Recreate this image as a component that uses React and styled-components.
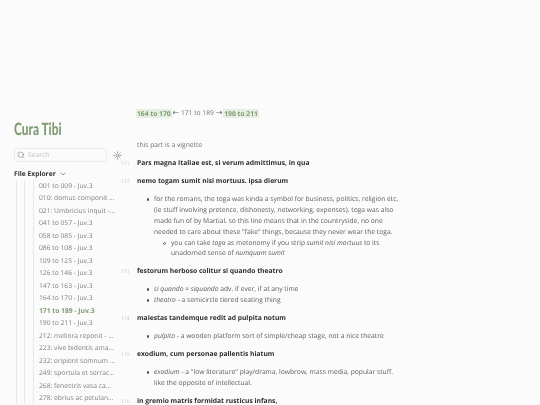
import React from "react";
import styled, { createGlobalStyle } from "styled-components";
import { Search, Sun, ChevronDown } from "lucide-react";

const GlobalStyle = createGlobalStyle`
  html, body {
    margin: 0;
    padding: 0;
    background: #fbfbfb;
  }
  body {
    font-family: "Open Sans", "Liberation Sans", sans-serif;
    font-size: 6.72px;
    line-height: 10.8px;
    color: #5a5a5a;
    text-rendering: geometricPrecision;
  }
`;

const Page = styled.div`
  display: flex;
  width: 540px;
  height: 405px;
  overflow: hidden;
`;

const Sidebar = styled.aside`
  width: 137px;
  flex: none;
  box-sizing: border-box;
  padding: 120px 0 0 14px;
  will-change: transform;
`;

const Title = styled.h1`
  margin: 0 0 10px;
  font-family: "Lato", "Liberation Sans", sans-serif;
  font-size: 17px;
  line-height: 18px;
  font-weight: 900;
  color: #7f9c72;
  transform: scaleX(0.7);
  transform-origin: left center;
  white-space: nowrap;
`;

const SearchRow = styled.div`
  display: flex;
  align-items: center;
  gap: 5px;
`;

const SearchBox = styled.div`
  width: 93px;
  height: 14px;
  box-sizing: border-box;
  display: flex;
  align-items: center;
  gap: 3px;
  padding-left: 2px;
  border: 1px solid #ececec;
  border-radius: 3px;
  color: #c4c4c4;
  svg {
    color: #666;
  }
`;

const ThemeToggle = styled.div`
  display: flex;
  margin-left: 1px;
  color: #555;
`;

const ExplorerHead = styled.div`
  display: flex;
  align-items: center;
  gap: 3px;
  margin-top: 6px;
  height: 12px;
  font-weight: 700;
  color: #333;
`;

const Guide = styled.div`
  margin-left: ${(p) => p.$indent}px;
  padding-left: ${(p) => p.$pad}px;
  border-left: 1px solid #e8e8e8;
`;

const FileList = styled.ul`
  list-style: none;
  margin: 0;
  padding: 0;
  width: 76px;
`;

const FileItem = styled.li`
  height: 12.47px;
  line-height: 12.47px;
  white-space: nowrap;
  overflow: hidden;
  text-overflow: ellipsis;
  color: ${(p) => (p.$active ? "#7f9c72" : "#808080")};
  font-weight: ${(p) => (p.$active ? 700 : 400)};
`;

const Main = styled.main`
  width: 267px;
  flex: none;
  padding-top: 108px;
  will-change: transform;
`;

const Nav = styled.div`
  display: flex;
  align-items: center;
  gap: 1.8px;
  height: 10.8px;
  margin-bottom: 21.7px;
  color: #777;
  white-space: nowrap;
`;

const NavLink = styled.span`
  padding: 0 1px;
  margin: 0 -1px;
  border-radius: 1px;
  background: #e5eee0;
  color: #7f9c72;
  font-weight: 700;
  line-height: 9px;
`;

const Arrow = styled.span`
  font-family: "DejaVu Sans", sans-serif;
  font-size: 8px;
  color: #666;
`;

const Note = styled.p`
  margin: 0 0 7.2px;
  color: #707070;
`;

const Verse = styled.p`
  position: relative;
  margin: 0 0 7.2px;
  font-weight: 700;
  color: #2e2e2e;
  white-space: nowrap;
`;

const LineNo = styled.span`
  position: absolute;
  left: -16px;
  top: 1px;
  font-size: 5px;
  font-weight: 400;
  color: #c4c4c4;
`;

const Notes = styled.ul`
  margin: 0 0 7.2px;
  padding-left: 17px;
  color: #5c5c5c;
  list-style: none;
`;

const NoteItem = styled.li`
  position: relative;
  &::before {
    content: "";
    position: absolute;
    left: -7.5px;
    top: 4px;
    width: 2.6px;
    height: 2.6px;
    border-radius: 50%;
    background: #555;
  }
`;

const SubNotes = styled.ul`
  margin: 0;
  padding-left: 17px;
  list-style: none;
`;

const SubNote = styled.li`
  position: relative;
  &::before {
    content: "";
    position: absolute;
    left: -8.5px;
    top: 4px;
    box-sizing: border-box;
    width: 3px;
    height: 3px;
    border-radius: 50%;
    border: 0.5px solid #666;
  }
`;

const files = [
  "001 to 009 - Juv.3",
  "010: domus componit - Juv.3",
  "021: Umbricius inquit - Juv.3",
  "041 to 057 - Juv.3",
  "058 to 085 - Juv.3",
  "086 to 108 - Juv.3",
  "109 to 125 - Juv.3",
  "126 to 146 - Juv.3",
  "147 to 163 - Juv.3",
  "164 to 170 - Juv.3",
  "171 to 189 - Juv.3",
  "190 to 211 - Juv.3",
  "212: meliora reponit - Juv.3",
  "223: vive bidentis amans - Juv.3",
  "232: eripient somnum - Juv.3",
  "249: sportula et serraco - Juv.3",
  "268: fenestris vasa cadunt - Juv.3",
  "278: ebrius ac petulans - Juv.3",
];

const App = () => (
  <Page>
    <GlobalStyle />
    <Sidebar>
      <Title>Cura Tibi</Title>
      <SearchRow>
        <SearchBox>
          <Search size={8} strokeWidth={1.5} />
          Search
        </SearchBox>
        <ThemeToggle>
          <Sun size={9} strokeWidth={1.5} />
        </ThemeToggle>
      </SearchRow>
      <ExplorerHead>
        File Explorer
        <ChevronDown size={8} strokeWidth={1.5} />
      </ExplorerHead>
      <Guide $indent={2} $pad={7}>
        <Guide $indent={0} $pad={8}>
          <Guide $indent={0} $pad={5}>
            <FileList>
              {files.map((f) => (
                <FileItem key={f} $active={f.startsWith("171")}>
                  {f}
                </FileItem>
              ))}
            </FileList>
          </Guide>
        </Guide>
      </Guide>
    </Sidebar>
    <Main>
      <Nav>
        <NavLink>164 to 170</NavLink>
        <Arrow>←</Arrow>
        <span>171 to 189</span>
        <Arrow>→</Arrow>
        <NavLink>190 to 211</NavLink>
      </Nav>
      <Note>this part is a vignette</Note>
      <Verse>
        <LineNo>171</LineNo>Pars magna Italiae est, si verum admittimus, in qua
      </Verse>
      <Verse>
        <LineNo>172</LineNo>nemo togam sumit nisi mortuus. ipsa dierum
      </Verse>
      <Notes>
        <NoteItem>
          for the romans, the toga was kinda a symbol for business, politics, religion etc,
          (ie stuff involving pretence, dishonesty, networking, expenses). toga was also
          made fun of by Martial. so this line means that in the countryside, no one
          needed to care about these "fake" things, because they never wear the toga.
          <SubNotes>
            <SubNote>
              you can take <em>toga</em> as metonomy if you strip <em>sumit nisi mortuus</em> to its
              unadorned sense of <em>numquam sumit</em>
            </SubNote>
          </SubNotes>
        </NoteItem>
      </Notes>
      <Verse>
        <LineNo>173</LineNo>festorum herboso colitur si quando theatro
      </Verse>
      <Notes>
        <NoteItem>
          <em>si quando</em> = <em>siquando</em> adv. if ever, if at any time
        </NoteItem>
        <NoteItem>
          <em>theatro</em> - a semicircle tiered seating thing
        </NoteItem>
      </Notes>
      <Verse>
        <LineNo>174</LineNo>maiestas tandemque redit ad pulpita notum
      </Verse>
      <Notes>
        <NoteItem>
          <em>pulpito</em> - a wooden platform sort of simple/cheap stage, not a nice theatre
        </NoteItem>
      </Notes>
      <Verse>
        <LineNo>175</LineNo>exodium, cum personae pallentis hiatum
      </Verse>
      <Notes>
        <NoteItem>
          <em>exodium</em> - a "low literature" play/drama, lowbrow, mass media, popular stuff.
          like the opposite of intellectual.
        </NoteItem>
      </Notes>
      <Verse>
        <LineNo>176</LineNo>in gremio matris formidat rusticus infans,
      </Verse>
    </Main>
  </Page>
);

export default App;
